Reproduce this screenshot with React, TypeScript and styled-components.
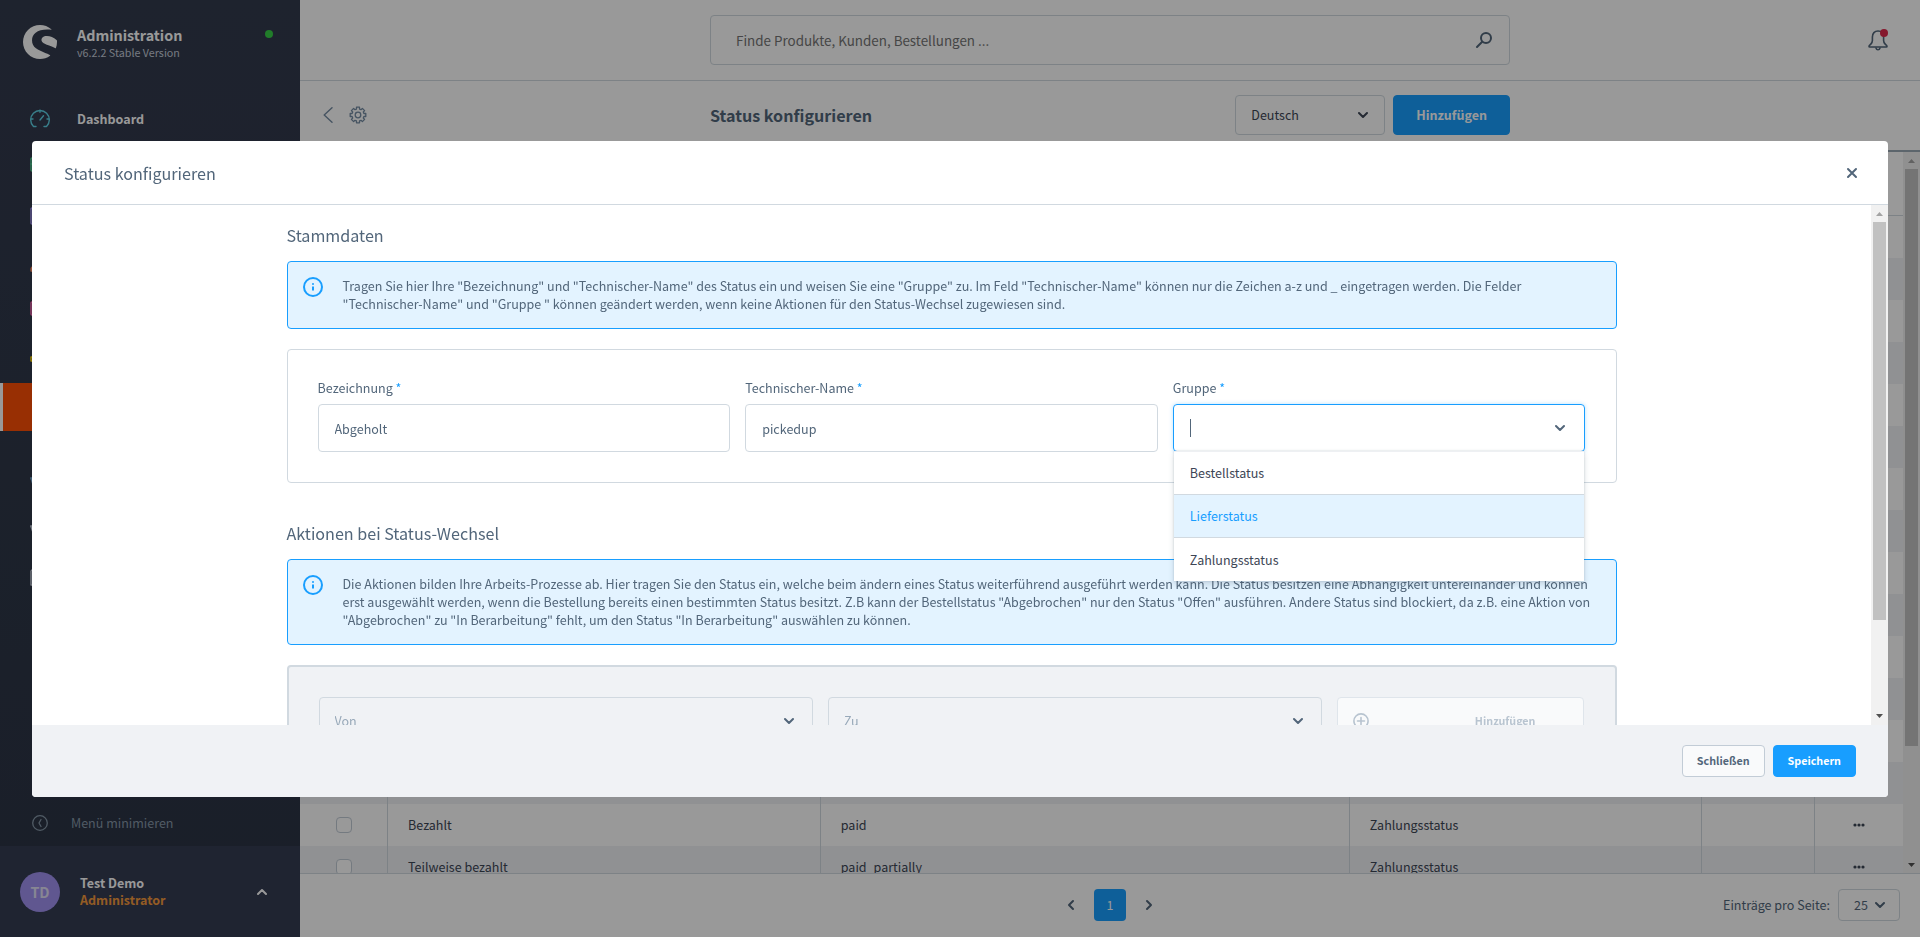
import React from 'react';
import styled, { createGlobalStyle, css } from 'styled-components';
import { SiShopware } from 'react-icons/si';

const color = {
  text: '#52667a',
  dark: '#3d4655',
  border: '#d1d9e0',
  blue: '#189eff',
  blueLight: '#e3f3ff',
  grey: '#f0f2f5',
  muted: '#98a9b9',
};

const GlobalStyle = createGlobalStyle`
  *, *::before, *::after { box-sizing: border-box; }
  body {
    margin: 0;
    color: ${color.text};
    font-family: "Source Sans Pro", "Noto Sans CJK JP", "Noto Sans", sans-serif;
    font-size: 14px;
    font-size-adjust: 0.486;
    line-height: 18px;
  }
  button, input, select { font: inherit; font-size-adjust: inherit; color: inherit; margin: 0; }
  button { cursor: pointer; }
  h1, h2, h3, p { margin: 0; }
  svg { display: block; flex: none; }
`;

/* ---------- icons ---------- */

const Line = styled.svg<{ $w?: number }>`
  fill: none;
  stroke: currentColor;
  stroke-width: ${(p) => p.$w ?? 2};
  stroke-linecap: round;
  stroke-linejoin: round;
`;

const ChevronDown = () => (
  <Line $w={2} width="10" height="10" viewBox="0 0 10 10" aria-hidden="true"><path d="M1 3l4 4 4-4" /></Line>
);
const ChevronUp = () => (
  <Line $w={2} width="10" height="10" viewBox="0 0 10 10" aria-hidden="true"><path d="M1 7l4-4 4 4" /></Line>
);
const ChevronLeft = () => (
  <Line $w={2} width="10" height="12" viewBox="0 0 10 12" aria-hidden="true"><path d="M7 2L3 6l4 4" /></Line>
);
const ChevronRight = () => (
  <Line $w={2} width="10" height="12" viewBox="0 0 10 12" aria-hidden="true"><path d="M3 2l4 4-4 4" /></Line>
);
const BackIcon = () => (
  <Line $w={1.4} width="10" height="16" viewBox="0 0 10 16" aria-hidden="true"><path d="M9 .7L1.200 8 9 15.300" /></Line>
);
const CloseIcon = () => (
  <Line $w={2} width="12" height="12" viewBox="0 0 12 12" aria-hidden="true"><path d="M2 2l8 8M10 2l-8 8" /></Line>
);
const SearchIcon = () => (
  <Line $w={2} width="18" height="18" viewBox="0 0 18 18" aria-hidden="true">
    <circle cx="11" cy="7" r="5" /><path d="M7.2 10.8L2 16" />
  </Line>
);
const GearIcon = () => (
  <Line $w={1.3} width="18" height="18" viewBox="0 0 18 18" aria-hidden="true">
    <path d="M7.500 1.200h3v1.900l1.500.6 1.400-1.300 2.200 2.200-1.300 1.400.6 1.500h1.900v3h-1.900l-.6 1.500 1.300 1.400-2.200 2.200-1.400-1.300-1.500.6v1.900h-3v-1.900L6 14.300l-1.400 1.300-2.200-2.200L3.700 12l-.6-1.500H1.200v-3h1.900L3.700 6 2.400 4.600l2.200-2.200L6 3.700l1.500-.6z" />
    <circle cx="9" cy="9" r="2.800" />
  </Line>
);
const BellIcon = () => (
  <Line $w={1.6} width="22" height="22" viewBox="0 0 22 22" aria-hidden="true">
    <path d="M11 2C7.600 2 5.400 4.400 5.400 8v3.500c0 1.500-.6 2.500-1.600 3.600-.8.900-1.800 1.400-1.800 2.300 0 .4.300.6.700.6h16.600c.4 0 .7-.2.700-.6 0-.9-1-1.400-1.800-2.300-1-1.100-1.600-2.100-1.600-3.600V8C16.600 4.400 14.400 2 11 2z" />
    <path d="M9 19c.3 1.200 1.100 1.800 2 1.800s1.700-.6 2-1.800" />
  </Line>
);
const InfoIcon = () => (
  <Line $w={2} width="20" height="20" viewBox="0 0 20 20" aria-hidden="true">
    <circle cx="10" cy="10" r="9" />
    <path d="M10 9.500v4" strokeLinecap="butt" />
    <path d="M10 6.200v1.600" strokeLinecap="butt" />
  </Line>
);
const PlusCircle = () => (
  <Line $w={1.6} width="16" height="16" viewBox="0 0 16 16" aria-hidden="true">
    <circle cx="8" cy="8" r="7.100" /><path d="M8 4.500v7M4.500 8h7" />
  </Line>
);
const CollapseIcon = () => (
  <Line $w={1.3} width="16" height="16" viewBox="0 0 16 16" aria-hidden="true">
    <circle cx="8" cy="8" r="7.300" /><path d="M9 4.500L7 8l2 3.500" />
  </Line>
);
const GaugeIcon = () => (
  <Line $w={1.4} width="20" height="20" viewBox="0 0 20 20" aria-hidden="true">
    <path d="M3.500 17.500H6M16.500 17.500H14M3.500 17.500A9.300 9.300 0 1 1 16.500 17.500" />
    <path d="M10 1.200v2M1 10h2M17 10h2M10 11l3.500-4.200" />
  </Line>
);
const BoxIcon = () => (
  <Line $w={1.4} width="20" height="20" viewBox="0 0 20 20" aria-hidden="true">
    <rect x="1" y="1" width="18" height="13" rx="1" /><path d="M1 7h18" />
  </Line>
);
const BagIcon = () => (
  <Line $w={1.4} width="20" height="20" viewBox="0 0 20 20" aria-hidden="true">
    <rect x="1" y="3" width="18" height="16" rx="1" /><path d="M6 7V4a4 4 0 0 1 8 0v3" />
  </Line>
);
const PeopleIcon = () => (
  <Line $w={1.4} width="20" height="20" viewBox="0 0 20 20" aria-hidden="true">
    <circle cx="10" cy="6" r="4" /><path d="M1 18c0-4 3-7 9-7s9 3 9 7z" />
  </Line>
);
const PageIcon = () => (
  <Line $w={1.4} width="20" height="20" viewBox="0 0 20 20" aria-hidden="true">
    <rect x="1" y="1" width="18" height="13" rx="1" /><path d="M5 18h10" />
  </Line>
);
const HornIcon = () => (
  <Line $w={1.4} width="20" height="20" viewBox="0 0 20 20" aria-hidden="true">
    <path d="M1 8h4l13-6v16L5 12H1z" />
  </Line>
);
const PlugIcon = () => (
  <Line $w={1.4} width="20" height="20" viewBox="0 0 20 20" aria-hidden="true">
    <path d="M5 7h10v4a5 5 0 0 1-10 0zM7 7V3M13 7V3M10 16v3" />
  </Line>
);
const CartIcon = () => (
  <Line $w={1.4} width="20" height="20" viewBox="0 0 20 20" aria-hidden="true">
    <path d="M.8 7h18.400l-3 8H3.500z" />
  </Line>
);
const StoreIcon = () => (
  <Line $w={1.4} width="20" height="20" viewBox="0 0 20 20" aria-hidden="true">
    <path d="M1 4v14h18V4l-3-3H4z" />
  </Line>
);
const Dots = () => (
  <svg width="12" height="4" viewBox="0 0 12 4" fill="currentColor" aria-hidden="true">
    <circle cx="2" cy="2" r="1.600" /><circle cx="6" cy="2" r="1.600" /><circle cx="10" cy="2" r="1.600" />
  </svg>
);
const Triangle = ({ down }: { down?: boolean }) => (
  <svg width="7" height="4" viewBox="0 0 7 4" fill={down ? '#505050' : '#a3a3a3'} aria-hidden="true">
    <path d={down ? 'M0 0h7L3.500 4z' : 'M0 4h7L3.500 0z'} />
  </svg>
);

/* ---------- shared parts ---------- */

const ScrollTrack = styled.div`
  flex: none;
  display: flex;
  flex-direction: column;
  width: 17px;
  background: #f1f1f1;
`;
const ScrollEnd = styled.div`
  flex: none;
  display: grid;
  place-items: center;
  height: 17px;
`;
const ScrollRail = styled.div`
  flex: 1;
  padding: 0 2px;
`;
const ScrollThumb = styled.div<{ $share: number }>`
  height: ${(p) => p.$share}%;
  background: #c1c1c1;
`;
const Scrollbar = ({ share }: { share: number }) => (
  <ScrollTrack aria-hidden="true">
    <ScrollEnd><Triangle /></ScrollEnd>
    <ScrollRail><ScrollThumb $share={share} /></ScrollRail>
    <ScrollEnd><Triangle down /></ScrollEnd>
  </ScrollTrack>
);

const Button = styled.button<{ $primary?: boolean; $large?: boolean }>`
  height: ${(p) => (p.$large ? 40 : 32)}px;
  padding: 0 ${(p) => (p.$large ? 22 : 14)}px;
  border: 1px solid ${(p) => (p.$primary ? color.blue : '#c2ccd6')};
  border-radius: 4px;
  background: ${(p) => (p.$primary ? color.blue : '#f9fafb')};
  color: ${(p) => (p.$primary ? '#fff' : color.text)};
  font-size: ${(p) => (p.$large ? 14 : 12)}px;
  font-weight: 600;
`;

const IconButton = styled.button`
  display: grid;
  place-items: center;
  padding: 0;
  border: 0;
  background: none;
  color: inherit;
`;

const SelectShell = styled.div<{ $pad: number }>`
  display: grid;
  grid-template-columns: 1fr;
  align-items: center;
  > * { grid-area: 1 / 1; }
  > svg { justify-self: end; margin-right: ${(p) => p.$pad}px; pointer-events: none; }
`;
const NativeSelect = styled.select<{ $h: number }>`
  appearance: none;
  width: 100%;
  height: ${(p) => p.$h}px;
  padding: 0 15px;
  border: 1px solid ${color.border};
  border-radius: 4px;
  background: transparent;
  &:disabled { color: ${color.muted}; opacity: 1; }
`;

/* ---------- sidebar ---------- */

const Page = styled.div`
  display: flex;
  height: 100vh;
  overflow: hidden;
`;
const Sidebar = styled.aside`
  flex: none;
  display: flex;
  flex-direction: column;
  width: 300px;
  background: linear-gradient(#333b4e, #2b3444);
  color: #fff;
`;
const Brand = styled.header`
  display: flex;
  align-items: flex-start;
  height: 95px;
  padding: 25px 27px 0 23px;
`;
const BrandText = styled.div`
  flex: 1;
  padding-left: 20px;
`;
const BrandName = styled.div`
  font-size: 16px;
  font-weight: 600;
  line-height: 20px;
`;
const BrandVersion = styled.div`
  color: #c5ccd9;
  font-size: 12px;
  line-height: 16px;
`;
const OnlineDot = styled.span`
  width: 8px;
  height: 8px;
  margin-top: 5px;
  border-radius: 50%;
  background: #37d046;
`;
const Nav = styled.nav`
  flex: 1;
  overflow: hidden;
`;
const NavLink = styled.a<{ $tint: string; $active?: boolean; $gap?: boolean }>`
  display: flex;
  align-items: center;
  gap: 27px;
  height: 48px;
  margin-top: ${(p) => (p.$gap ? 26 : 0)}px;
  padding-left: 30px;
  color: #fff;
  font-weight: 600;
  text-decoration: none;
  svg { color: ${(p) => p.$tint}; }
  ${(p) => p.$active && css`
    padding-left: 27px;
    border-left: 3px solid #fff;
    background: #fe4f05;
  `}
`;
const Minimize = styled.button`
  display: flex;
  align-items: center;
  gap: 23px;
  height: 46px;
  padding: 0 32px;
  border: 0;
  background: none;
  color: #8798a9;
`;
const User = styled.div`
  display: flex;
  align-items: center;
  height: 91px;
  padding: 0 33px 0 20px;
  background: #343c53;
`;
const Avatar = styled.div`
  display: grid;
  place-items: center;
  width: 40px;
  height: 40px;
  margin-right: 20px;
  border-radius: 50%;
  background: #a092f0;
  color: #e2dff5;
  font-size: 16px;
  font-weight: 600;
`;
const UserText = styled.div`
  flex: 1;
  padding-bottom: 2px;
  font-weight: 600;
  line-height: 17px;
`;
const Role = styled.div`
  color: #f59a3c;
`;

/* ---------- main area ---------- */

const Main = styled.main`
  flex: 1;
  display: flex;
  flex-direction: column;
  min-width: 0;
  background: #fff;
`;
const TopGrid = styled.div`
  flex: none;
  display: grid;
  grid-template-columns: 1fr minmax(0, 800px) 1fr;
  align-items: center;
  border-bottom: 1px solid ${color.border};
`;
const SearchRow = styled(TopGrid)`
  height: 81px;
`;
const SmartBar = styled(TopGrid)`
  height: 71px;
  padding-bottom: 2px;
  border-bottom: 2px solid #9aa8b5;
`;
const SearchBox = styled.label`
  grid-column: 2;
  display: flex;
  align-items: center;
  height: 50px;
  padding: 0 16px 0 25px;
  border: 1px solid ${color.border};
  border-radius: 4px;
`;
const SearchInput = styled.input`
  flex: 1;
  border: 0;
  outline: 0;
  background: none;
  padding: 0;
  font-size: 15px;
  &::placeholder { color: #757575; opacity: 1; }
`;
const BellButton = styled(IconButton)`
  position: relative;
  justify-self: end;
  margin-right: 31px;
`;
const BellDot = styled.span`
  position: absolute;
  top: 0;
  right: 1px;
  width: 8px;
  height: 8px;
  border-radius: 50%;
  background: #de294c;
`;
const BarLeft = styled.div`
  display: flex;
  align-items: center;
  gap: 16px;
  padding-left: 23px;
  color: #758ca3;
`;
const BarCenter = styled.div`
  display: flex;
  align-items: center;
  gap: 8px;
`;
const BarTitle = styled.h1`
  flex: 1;
  font-size: 18px;
  font-weight: 600;
  line-height: 24px;
`;
const LanguageShell = styled(SelectShell)`
  width: 150px;
  color: ${color.dark};
`;

const ListArea = styled.div`
  flex: 1;
  display: flex;
  min-height: 0;
`;
const TableClip = styled.div`
  flex: 1;
  min-width: 0;
  overflow: hidden;
`;
const Table = styled.table`
  width: 100%;
  table-layout: fixed;
  border-collapse: separate;
  border-spacing: 0;
  color: ${color.dark};
  th { height: 64px; border-bottom: 1px solid ${color.border}; padding: 0; }
  td { height: 42px; padding: 0 20px; border-right: 1px solid ${color.border}; white-space: nowrap; }
  td:first-child { padding: 0 36px; }
  td:last-child { padding: 0; border-right: 0; }
  td:last-child button { margin: 0 auto; }
  tbody tr:nth-child(even) { background: ${color.grey}; }
`;
const CheckCol = styled.col`
  width: 88px;
`;
const ShareCol = styled.col<{ $share?: number }>`
  width: ${(p) => (p.$share ? `${p.$share}%` : 'auto')};
`;
const Check = styled.input`
  appearance: none;
  display: block;
  width: 16px;
  height: 16px;
  margin: 0;
  border: 1px solid #c2ccd6;
  border-radius: 4px;
  background: #fff;
`;
const Pagination = styled.footer`
  flex: none;
  display: grid;
  grid-template-columns: 1fr auto 1fr;
  align-items: center;
  height: 64px;
  padding-bottom: 2px;
  border-top: 1px solid ${color.border};
`;
const Pages = styled.div`
  grid-column: 2;
  display: flex;
  align-items: center;
  gap: 18px;
`;
const PageNumber = styled.button`
  width: 32px;
  height: 32px;
  padding: 0;
  border: 0;
  border-radius: 4px;
  background: ${color.blue};
  color: #fff;
  font-size: 14px;
`;
const PerPage = styled.label`
  display: flex;
  align-items: center;
  justify-content: flex-end;
  gap: 8px;
  padding-right: 20px;
`;
const PerPageShell = styled(SelectShell)`
  width: 62px;
`;

/* ---------- modal ---------- */

const Overlay = styled.div`
  position: fixed;
  inset: 0;
  display: flex;
  align-items: center;
  padding: 1px 32px 0;
  background: rgba(0, 0, 0, 0.4);
`;
const Modal = styled.section`
  flex: 1;
  display: flex;
  flex-direction: column;
  height: 70vh;
  border-radius: 4px;
  background: #fff;
  overflow: hidden;
`;
const ModalHeader = styled.header`
  flex: none;
  display: flex;
  align-items: center;
  justify-content: space-between;
  height: 64px;
  padding: 0 30px 0 32px;
  border-bottom: 1px solid ${color.border};
`;
const Heading = styled.h2`
  font-size: 18px;
  font-weight: 400;
  line-height: 24px;
`;
const ModalBody = styled.div`
  flex: 1;
  display: flex;
  min-height: 0;
`;
const ModalScroll = styled.div`
  flex: 1;
  min-width: 0;
  overflow: hidden;
  padding: 18px 32px;
`;
const Content = styled.div`
  display: flex;
  flex-direction: column;
  gap: 38px;
  max-width: 1330px;
  margin: 0 auto;
`;
const Section = styled.section`
  display: flex;
  flex-direction: column;
  gap: 14px;
`;
const SectionBody = styled.div`
  display: flex;
  flex-direction: column;
  gap: 20px;
`;
const Notice = styled.div`
  display: flex;
  gap: 20px;
  padding: 15px;
  border: 1px solid ${color.blue};
  border-radius: 4px;
  background: ${color.blueLight};
  > svg { color: ${color.blue}; }
`;
const Card = styled.div<{ $disabled?: boolean }>`
  display: grid;
  grid-template-columns: ${(p) => (p.$disabled ? '2fr 2fr 1fr' : '1fr 1fr 1fr')};
  gap: 15px;
  padding: 30px;
  border: ${(p) => (p.$disabled ? 2 : 1)}px solid ${color.border};
  border-radius: 4px;
  background: ${(p) => (p.$disabled ? color.grey : '#fff')};
`;
const Field = styled.div`
  display: flex;
  flex-direction: column;
  gap: 8px;
  min-width: 0;
`;
const Label = styled.label`
  line-height: 16px;
  &::after { content: " *"; color: ${color.blue}; }
`;
const TextInput = styled.input`
  width: 100%;
  height: 48px;
  padding: 0 16px;
  border: 1px solid ${color.border};
  border-radius: 4px;
  background: #fff;
`;
const Combo = styled.div`
  position: relative;
  display: flex;
  align-items: center;
  height: 48px;
  padding: 0 19px 0 16px;
  border: 1px solid ${color.blue};
  border-radius: 4px;
  box-shadow: 0 0 4px rgba(24, 158, 255, 0.3);
`;
const Caret = styled.span`
  width: 1px;
  height: 18px;
  background: ${color.text};
`;
const ComboInput = styled.input`
  flex: 1;
  min-width: 0;
  padding: 0;
  border: 0;
  outline: 0;
  background: none;
  caret-color: transparent;
`;
const Options = styled.ul`
  position: absolute;
  top: 100%;
  left: 0;
  right: 0;
  z-index: 1;
  margin: 0;
  padding: 0;
  border-top: 1px solid #eef0f3;
  background: #fff;
  box-shadow: 0 3px 6px rgba(60, 80, 100, 0.2), 0 0 2px rgba(60, 80, 100, 0.2);
  list-style: none;
`;
const Option = styled.li<{ $selected?: boolean }>`
  display: flex;
  align-items: center;
  height: 43px;
  padding: 0 16px;
  border-bottom: 1px solid ${color.border};
  background: ${(p) => (p.$selected ? color.blueLight : '#fff')};
  color: ${(p) => (p.$selected ? color.blue : color.dark)};
  &:last-child { border-bottom: 0; }
`;
const AddButton = styled.button`
  display: flex;
  align-items: center;
  justify-content: space-between;
  height: 48px;
  padding: 0 48px 0 15px;
  border: 1px solid #dfe5eb;
  border-radius: 4px;
  background: #f9fafb;
  color: #b8c4d0;
  font-size: 12px;
  font-weight: 600;
`;
const ModalFooter = styled.footer`
  flex: none;
  display: flex;
  align-items: center;
  justify-content: flex-end;
  gap: 8px;
  height: 72px;
  padding: 0 32px;
  background: ${color.grey};
`;

/* ---------- data ---------- */

const navItems = [
  { name: 'Kataloge', tint: '#4fcf92', icon: <BoxIcon /> },
  { name: 'Bestellungen', tint: '#a092f0', icon: <BagIcon /> },
  { name: 'Kunden', tint: '#f88962', icon: <PeopleIcon /> },
  { name: 'Inhalte', tint: '#ff68b4', icon: <PageIcon /> },
  { name: 'Marketing', tint: '#ffd700', icon: <HornIcon /> },
  { name: 'Status', tint: '#ffffff', icon: <PlugIcon />, active: true },
  { name: 'Storefront', tint: '#6e9fc4', icon: <CartIcon />, gap: true },
  { name: 'Warenkorb', tint: '#c5ccd9', icon: <CartIcon /> },
  { name: 'Verkaufskanal', tint: '#c5ccd9', icon: <StoreIcon /> },
];

const rows = [
  ...Array.from({ length: 14 }, () => ['', '', '']),
  ['Bezahlt', 'paid', 'Zahlungsstatus'],
  ['Teilweise bezahlt', 'paid_partially', 'Zahlungsstatus'],
];

const options = ['Bestellstatus', 'Lieferstatus', 'Zahlungsstatus'];

export default function App() {
  return (
    <>
      <GlobalStyle />
      <Page>
        <Sidebar>
          <Brand>
            <SiShopware size={34} />
            <BrandText>
              <BrandName>Administration</BrandName>
              <BrandVersion>v6.2.2 Stable Version</BrandVersion>
            </BrandText>
            <OnlineDot />
          </Brand>
          <Nav>
            <NavLink href="#dashboard" $tint="#5fd3e6"><GaugeIcon />Dashboard</NavLink>
            {navItems.map((n) => (
              <NavLink key={n.name} href="#" aria-label={n.name} $tint={n.tint} $active={n.active} $gap={n.gap}>
                {n.icon}
              </NavLink>
            ))}
          </Nav>
          <Minimize type="button"><CollapseIcon />Menü minimieren</Minimize>
          <User>
            <Avatar>TD</Avatar>
            <UserText>Test Demo<Role>Administrator</Role></UserText>
            <IconButton type="button" aria-label="Benutzermenü"><ChevronUp /></IconButton>
          </User>
        </Sidebar>

        <Main>
          <SearchRow>
            <SearchBox>
              <SearchInput type="text" aria-label="Suche" placeholder="Finde Produkte, Kunden, Bestellungen ..." />
              <SearchIcon />
            </SearchBox>
            <BellButton type="button" aria-label="Benachrichtigungen"><BellIcon /><BellDot /></BellButton>
          </SearchRow>
          <SmartBar>
            <BarLeft>
              <IconButton type="button" aria-label="Zurück"><BackIcon /></IconButton>
              <IconButton type="button" aria-label="Einstellungen"><GearIcon /></IconButton>
            </BarLeft>
            <BarCenter>
              <BarTitle>Status konfigurieren</BarTitle>
              <LanguageShell $pad={17}>
                <NativeSelect $h={40} aria-label="Sprache"><option>Deutsch</option></NativeSelect>
                <ChevronDown />
              </LanguageShell>
              <Button type="button" $primary $large>Hinzufügen</Button>
            </BarCenter>
          </SmartBar>
          <ListArea>
            <TableClip>
              <Table>
                <colgroup>
                  <CheckCol />
                  <ShareCol $share={27} />
                  <ShareCol $share={33} />
                  <ShareCol $share={22} />
                  <ShareCol />
                  <CheckCol />
                </colgroup>
                <thead><tr><th /><th /><th /><th /><th /><th /></tr></thead>
                <tbody>
                  {rows.map(([name, tech, group], i) => (
                    <tr key={i}>
                      <td><Check type="checkbox" aria-label="Zeile auswählen" /></td>
                      <td>{name}</td>
                      <td>{tech}</td>
                      <td>{group}</td>
                      <td />
                      <td><IconButton type="button" aria-label="Aktionen"><Dots /></IconButton></td>
                    </tr>
                  ))}
                </tbody>
              </Table>
            </TableClip>
            <Scrollbar share={84} />
          </ListArea>
          <Pagination>
            <Pages>
              <IconButton type="button" aria-label="Vorherige Seite"><ChevronLeft /></IconButton>
              <PageNumber type="button">1</PageNumber>
              <IconButton type="button" aria-label="Nächste Seite"><ChevronRight /></IconButton>
            </Pages>
            <PerPage>
              Einträge pro Seite:
              <PerPageShell $pad={15}>
                <NativeSelect $h={32}><option>25</option></NativeSelect>
                <ChevronDown />
              </PerPageShell>
            </PerPage>
          </Pagination>
        </Main>
      </Page>

      <Overlay>
        <Modal role="dialog" aria-modal="true" aria-labelledby="modal-title">
          <ModalHeader>
            <Heading id="modal-title">Status konfigurieren</Heading>
            <IconButton type="button" aria-label="Fenster schließen"><CloseIcon /></IconButton>
          </ModalHeader>
          <ModalBody>
            <ModalScroll>
              <Content>
                <Section>
                  <Heading as="h3">Stammdaten</Heading>
                  <SectionBody>
                    <Notice>
                      <InfoIcon />
                      <p>
                        Tragen Sie hier Ihre "Bezeichnung" und "Technischer-Name" des Status ein und weisen Sie eine "Gruppe" zu. Im Feld
                        "Technischer-Name" können nur die Zeichen a-z und _ eingetragen werden. Die Felder "Technischer-Name" und "Gruppe
                        " können geändert werden, wenn keine Aktionen für den Status-Wechsel zugewiesen sind.
                      </p>
                    </Notice>
                    <Card>
                      <Field>
                        <Label htmlFor="name">Bezeichnung</Label>
                        <TextInput id="name" type="text" defaultValue="Abgeholt" />
                      </Field>
                      <Field>
                        <Label htmlFor="tech">Technischer-Name</Label>
                        <TextInput id="tech" type="text" defaultValue="pickedup" />
                      </Field>
                      <Field>
                        <Label htmlFor="group">Gruppe</Label>
                        <Combo>
                          <Caret />
                          <ComboInput id="group" type="text" role="combobox" aria-expanded="true" aria-controls="group-options" />
                          <ChevronDown />
                          <Options id="group-options" role="listbox">
                            {options.map((o) => (
                              <Option key={o} role="option" aria-selected={o === 'Lieferstatus'} $selected={o === 'Lieferstatus'}>{o}</Option>
                            ))}
                          </Options>
                        </Combo>
                      </Field>
                    </Card>
                  </SectionBody>
                </Section>
                <Section>
                  <Heading as="h3">Aktionen bei Status-Wechsel</Heading>
                  <SectionBody>
                    <Notice>
                      <InfoIcon />
                      <p>
                        Die Aktionen bilden Ihre Arbeits-Prozesse ab. Hier tragen Sie den Status ein, welche beim ändern eines Status
                        weiterführend ausgeführt werden kann. Die Status besitzen eine Abhängigkeit untereinander und können erst ausgewählt
                        werden, wenn die Bestellung bereits einen bestimmten Status besitzt. Z.B kann der Bestellstatus "Abgebrochen" nur den
                        Status "Offen" ausführen. Andere Status sind blockiert, da z.B. eine Aktion von "Abgebrochen" zu "In Berarbeitung"
                        fehlt, um den Status "In Berarbeitung" auswählen zu können.
                      </p>
                    </Notice>
                    <Card $disabled>
                      <SelectShell $pad={19}>
                        <NativeSelect $h={48} disabled aria-label="Von"><option>Von</option></NativeSelect>
                        <ChevronDown />
                      </SelectShell>
                      <SelectShell $pad={19}>
                        <NativeSelect $h={48} disabled aria-label="Zu"><option>Zu</option></NativeSelect>
                        <ChevronDown />
                      </SelectShell>
                      <AddButton type="button" disabled><PlusCircle />Hinzufügen</AddButton>
                    </Card>
                  </SectionBody>
                </Section>
              </Content>
            </ModalScroll>
            <Scrollbar share={82} />
          </ModalBody>
          <ModalFooter>
            <Button type="button">Schließen</Button>
            <Button type="button" $primary>Speichern</Button>
          </ModalFooter>
        </Modal>
      </Overlay>
    </>
  );
}
